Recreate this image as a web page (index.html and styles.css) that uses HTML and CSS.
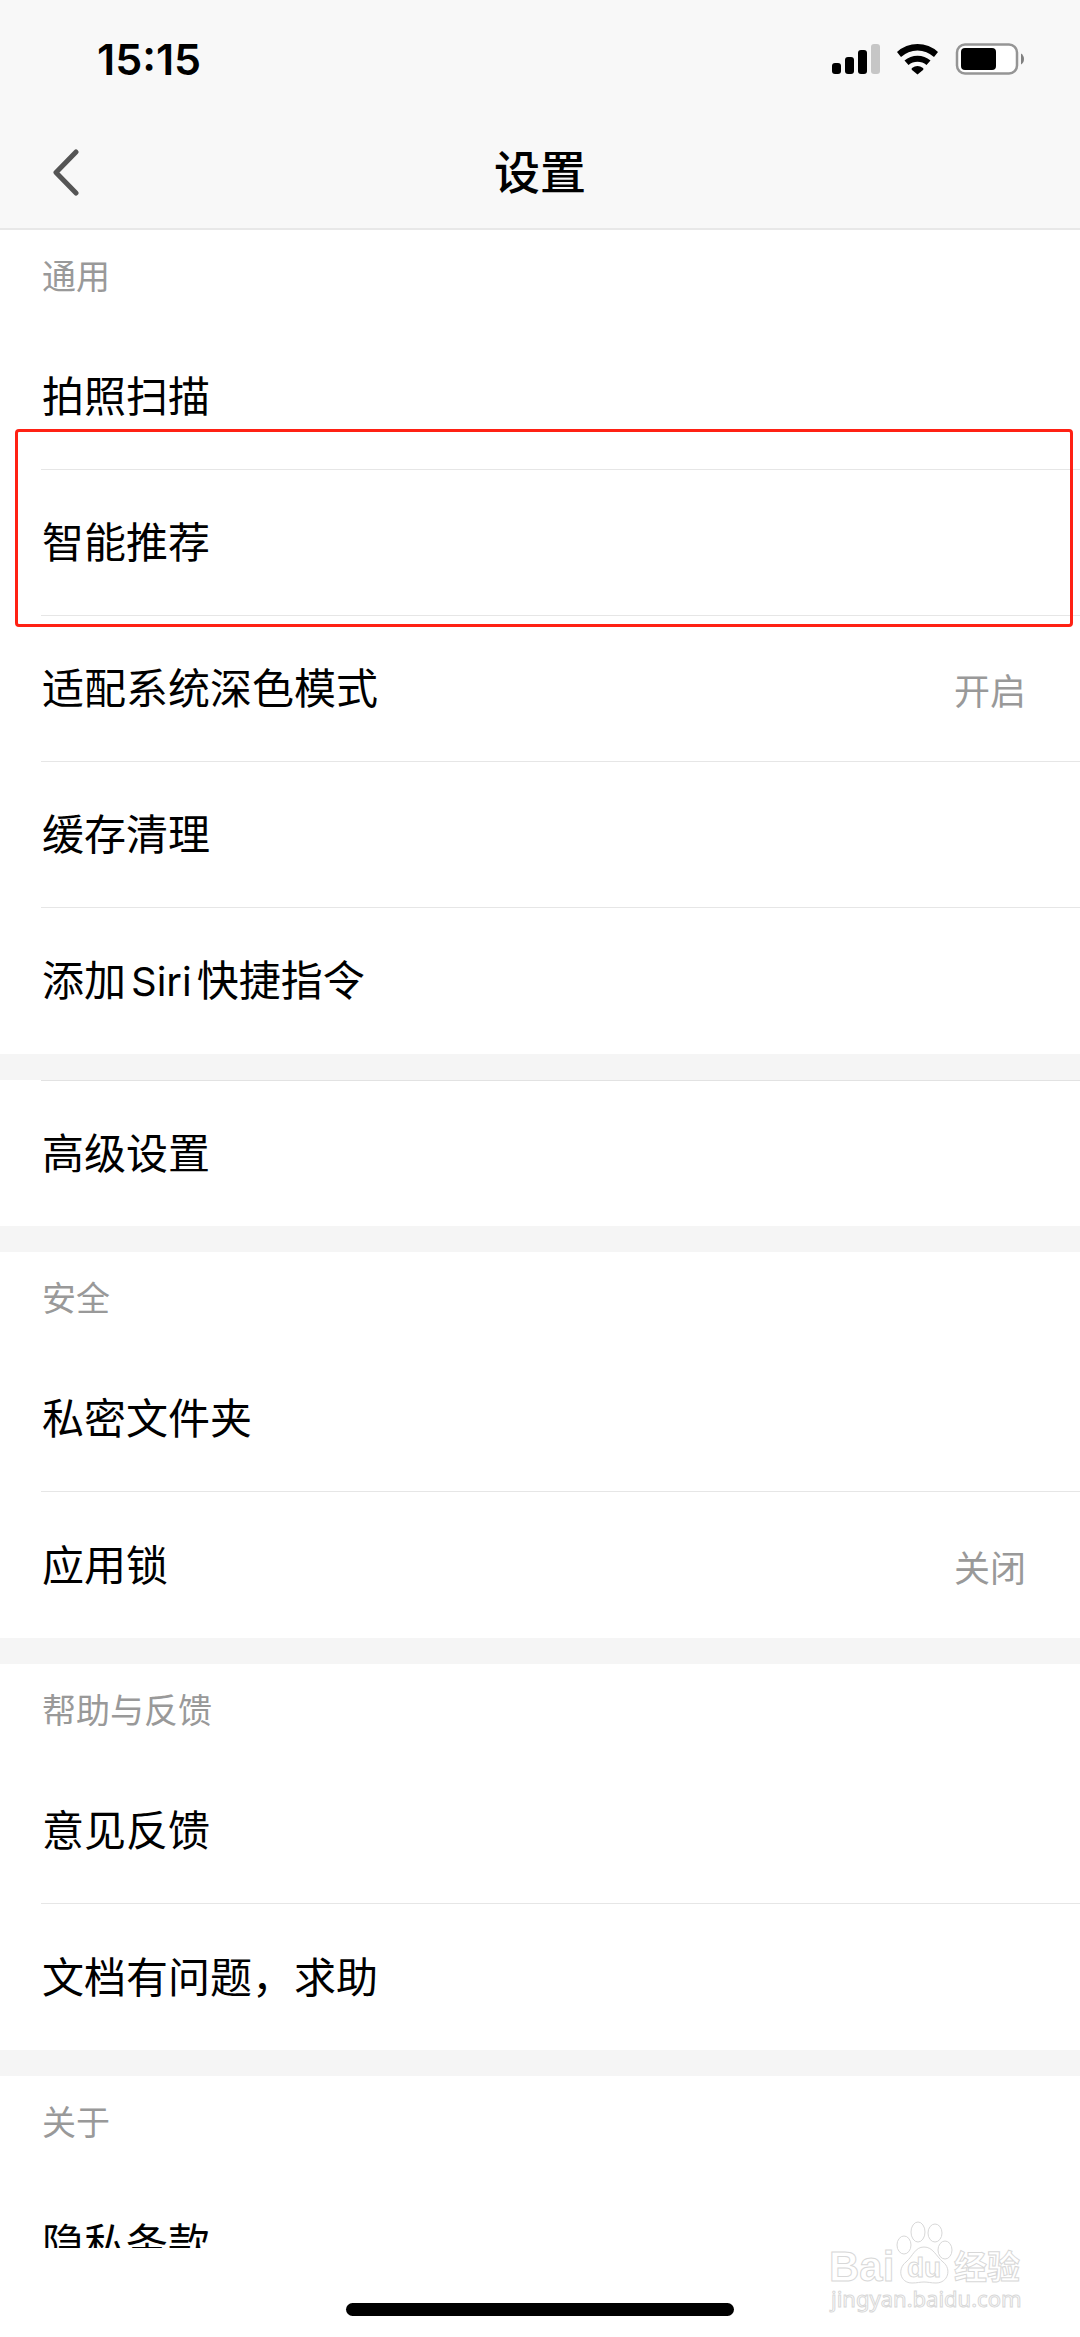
FILE: index.html
```html
<!DOCTYPE html>
<html lang="zh-CN">
<head>
<meta charset="utf-8">
<meta name="viewport" content="width=device-width, initial-scale=1">
<title>设置</title>
<link rel="stylesheet" href="styles.css">
</head>
<body>
<div class="app">
  <header class="header">
    <div class="status-bar">
      <time class="clock">15:15</time>
      <svg class="status-icons" viewBox="0 0 192 32" width="192" height="32" aria-hidden="true">
        <rect x="0" y="20" width="9" height="11" rx="3"/>
        <rect x="13" y="14" width="9" height="17" rx="3"/>
        <rect x="26" y="7" width="9" height="24" rx="3"/>
        <rect x="39" y="1" width="9" height="30" rx="3" fill="#c6c6c6"/>
        <path d="M65 9a30 30 0 0 1 41 0l-4 5a24 24 0 0 0-33 0z"/>
        <path d="M72.500 17.500a20 20 0 0 1 26 0l-4 4.500a14 14 0 0 0-18 0z"/>
        <path d="M80 25q5.500-4 11 0q1 1 0 2l-5.500 4.500l-5.500-4.500q-1-1 0-2z"/>
        <rect x="125" y="1.500" width="60" height="29" rx="8" fill="#fff" stroke="#959595" stroke-width="2.500"/>
        <rect x="129" y="5" width="35" height="22" rx="4"/>
        <path d="M189 10.500q3 2 3 5.500t-3 5.500z" fill="#808080"/>
      </svg>
    </div>
    <div class="nav-bar">
      <button class="back" type="button" aria-label="返回">
        <svg viewBox="0 0 28 48" width="28" height="48" aria-hidden="true"><path d="M24 4L4 24.500L24 45" fill="none" stroke="#555" stroke-width="5" stroke-linecap="round" stroke-linejoin="round"/></svg>
      </button>
      <h1 class="title">设置</h1>
    </div>
  </header>

  <main class="content">
    <section class="group">
      <h2 class="group-title">通用</h2>
      <ul class="list">
        <li class="item"><a class="row" href="#scan">拍照扫描</a></li>
        <li class="item highlighted"><a class="row" href="#recommend">智能推荐</a></li>
        <li class="item"><a class="row" href="#dark">适配系统深色模式<span class="value">开启</span></a></li>
        <li class="item"><a class="row" href="#cache">缓存清理</a></li>
        <li class="item"><a class="row" href="#siri"><span>添加<span class="latin">Siri</span>快捷指令</span></a></li>
      </ul>
    </section>
    <section class="group">
      <ul class="list list-ruled">
        <li class="item"><a class="row" href="#advanced">高级设置</a></li>
      </ul>
    </section>
    <section class="group">
      <h2 class="group-title">安全</h2>
      <ul class="list">
        <li class="item"><a class="row" href="#private">私密文件夹</a></li>
        <li class="item"><a class="row" href="#lock">应用锁<span class="value">关闭</span></a></li>
      </ul>
    </section>
    <section class="group">
      <h2 class="group-title">帮助与反馈</h2>
      <ul class="list">
        <li class="item"><a class="row" href="#feedback">意见反馈</a></li>
        <li class="item"><a class="row" href="#help">文档有问题，求助</a></li>
      </ul>
    </section>
    <section class="group">
      <h2 class="group-title">关于</h2>
      <ul class="list">
        <li class="item"><a class="row" href="#privacy">隐私条款</a></li>
      </ul>
    </section>
  </main>

  <footer class="home-area"><div class="home-indicator"></div></footer>

  <svg class="watermark" viewBox="0 0 200 104" width="200" height="104" role="img" aria-label="Baidu经验">
    <g class="wm-shape">
      <ellipse cx="76" cy="34" rx="7" ry="9"/>
      <ellipse cx="90" cy="21" rx="7" ry="10"/>
      <ellipse cx="107" cy="22" rx="7" ry="9"/>
      <ellipse cx="117" cy="39" rx="7" ry="9"/>
      <path d="M96 36c-9 0-11 9-18 15c-9 7-6 21 6 21c5 0 8-1 12-1s7 1 12 1c12 0 16-14 7-21c-7-6-10-15-19-15z"/>
    </g>
    <text class="wm-text wm-latin" x="1" y="70" font-size="42">Bai</text>
    <text class="wm-text wm-latin" x="79" y="66" font-size="28">du</text>
    <text class="wm-text wm-cjk" x="126" y="68" font-size="33">经验</text>
    <text class="wm-text wm-url" x="3" y="96" font-size="22">jingyan.baidu.com</text>
  </svg>
</div>
</body>
</html>
```

FILE: styles.css
```css
* {
  box-sizing: border-box;
}

body {
  margin: 0;
  background: #fff;
  color: #000;
  font-family: Inter, "Noto Sans CJK SC", sans-serif;
}

.app {
  position: relative;
  display: flex;
  flex-direction: column;
  height: 100vh;
}

.header {
  flex: none;
  background: #f8f8f8;
  border-bottom: 2px solid #e8e8e8;
}

.status-bar {
  display: flex;
  align-items: center;
  justify-content: space-between;
  height: 116px;
  padding: 2px 56px 0 97px;
}

.clock {
  font-size: 43px;
  line-height: 50px;
  font-weight: 600;
}

.nav-bar {
  display: grid;
  grid-template-columns: 1fr auto 1fr;
  align-items: center;
  height: 112px;
  padding: 0 52px;
}

.back {
  display: flex;
  justify-self: start;
  padding: 0;
  border: 0;
  background: none;
}

.title {
  margin: 0;
  font-size: 46px;
  line-height: 64px;
  font-weight: 500;
}

.content {
  flex: 1;
  min-height: 0;
  overflow: hidden;
}

.group + .group {
  border-top: 26px solid #f5f5f5;
}

.group-title {
  height: 94px;
  margin: 0;
  padding: 22px 42px 0;
  color: #999;
  font-size: 34px;
  line-height: 50px;
  font-weight: 400;
}

.list {
  margin: 0;
  padding: 0;
  list-style: none;
}

.item {
  position: relative;
  padding-left: 41px;
}

.row {
  display: flex;
  align-items: center;
  justify-content: space-between;
  height: 146px;
  padding: 1px 54px 0 1px;
  color: #000;
  font-size: 42px;
  line-height: 60px;
  text-decoration: none;
}

.item:not(:last-child) .row {
  border-bottom: 1px solid #e6e6e6;
}

.list-ruled .row {
  border-top: 1px solid #e2e2e2;
}

.value {
  padding-top: 6px;
  color: #999;
  font-size: 36px;
}

.latin {
  margin: 0 5px;
  font-size: 40px;
}

.highlighted::after {
  content: "";
  position: absolute;
  z-index: 1;
  inset: -41px 7px -11px 15px;
  border: 3px solid #ff2114;
  border-radius: 4px;
  pointer-events: none;
}

.home-area {
  display: flex;
  flex: none;
  justify-content: center;
  align-items: flex-end;
  height: 89px;
  padding-bottom: 21px;
}

.home-indicator {
  width: 36%;
  height: 13px;
  border-radius: 7px;
  background: #000;
}

.watermark {
  position: absolute;
  right: 52px;
  bottom: 22px;
}

.wm-shape,
.wm-text {
  fill: #fff;
  stroke: #d8d8d8;
  stroke-width: 1px;
}

.wm-latin {
  font-family: "Liberation Sans", sans-serif;
  font-weight: 700;
}

.wm-cjk {
  font-family: "Noto Sans CJK SC", sans-serif;
  font-weight: 700;
}

.wm-url {
  font-family: "Noto Sans", sans-serif;
}
```
